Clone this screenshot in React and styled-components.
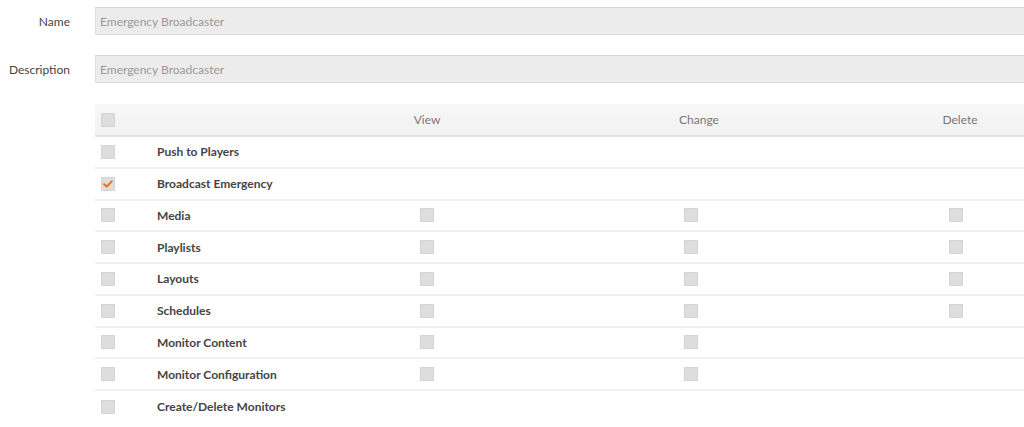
import styled, { createGlobalStyle } from 'styled-components';

const GlobalStyle = createGlobalStyle`
    html, body {
        margin: 0;
        padding: 0;
        background: #FFFFFF;
        overflow: hidden;
    }
    body {
        font-family: Lato, "Open Sans", sans-serif;
    }
`;

const PERMISSIONS = [
    { name: 'Push to Players', cols: [] },
    { name: 'Broadcast Emergency', cols: [], checked: true },
    { name: 'Media', cols: ['view', 'change', 'delete'] },
    { name: 'Playlists', cols: ['view', 'change', 'delete'] },
    { name: 'Layouts', cols: ['view', 'change', 'delete'] },
    { name: 'Schedules', cols: ['view', 'change', 'delete'] },
    { name: 'Monitor Content', cols: ['view', 'change'] },
    { name: 'Monitor Configuration', cols: ['view', 'change'] },
    { name: 'Create/Delete Monitors', cols: [] },
];

// textShift / boxShift: small nudges to line up with the original table
const COLUMNS = [
    { key: 'view', label: 'View', textShift: 0, boxShift: 0 },
    { key: 'change', label: 'Change', textShift: 16, boxShift: 0 },
    { key: 'delete', label: 'Delete', textShift: 10, boxShift: 2 },
];

const Checkbox = ({ checked }) => (
    <CheckBox>
        {checked && (
            <svg width="10" height="8" viewBox="0 0 10 8">
                <path d="M1.2 4.2 L3.8 6.6 L8.8 1.4" fill="none" stroke="#F26B21" strokeWidth="2" strokeLinecap="round" strokeLinejoin="round" />
            </svg>
        )}
    </CheckBox>
);

const FieldRow = ({ label, value }) => (
    <Field>
        <FieldLabel>{label}</FieldLabel>
        <FieldInput>{value}</FieldInput>
    </Field>
);

export default function App() {
    return (
        <Page>
            <GlobalStyle />
            <FieldRow label="Name" value="Emergency Broadcaster" />
            <FieldRow label="Description" value="Emergency Broadcaster" />
            <Table>
                <HeaderRow>
                    <BoxCell><Checkbox /></BoxCell>
                    <div />
                    {COLUMNS.map(c => (
                        <HeaderText key={c.key} $shift={c.textShift}>{c.label}</HeaderText>
                    ))}
                </HeaderRow>
                {PERMISSIONS.map((p, i) => (
                    <Row key={p.name} $last={i === PERMISSIONS.length - 1}>
                        <BoxCell><Checkbox checked={p.checked} /></BoxCell>
                        <RowLabel>{p.name}</RowLabel>
                        {COLUMNS.map(c => (
                            <ColCell key={c.key} $shift={c.boxShift}>
                                {p.cols.includes(c.key) && <Checkbox />}
                            </ColCell>
                        ))}
                    </Row>
                ))}
            </Table>
        </Page>
    );
}

const Page = styled.div`
    width: 1100px;
    padding-top: 7px;
    display: flex;
    flex-direction: column;
    gap: 20px;
`;

const Field = styled.div`
    display: flex;
    align-items: center;
    gap: 25px;
`;

const FieldLabel = styled.label`
    width: 70px;
    text-align: right;
    font-size: 12px;
    color: #444;
`;

const FieldInput = styled.div`
    flex: 1;
    height: 28px;
    box-sizing: border-box;
    display: flex;
    align-items: center;
    padding-left: 4px;
    background: #ECECEC;
    border: 1px solid #DEDEDE;
    border-top-color: #D6D6D6;
    font-size: 12px;
    color: #999;
`;

const Table = styled.div`
    margin-left: 95px;
    margin-top: 1px;
    display: flex;
    flex-direction: column;
`;

const GRID = `
    display: grid;
    grid-template-columns: 62px 138px 264px 264px 264px;
    align-items: center;
    box-sizing: border-box;
`;

const HeaderRow = styled.div`
    ${GRID}
    height: 33px;
    background: linear-gradient(#F7F7F7, #F1F1F1);
    border-bottom: 2px solid #E2E2E2;
`;

const HeaderText = styled.div`
    text-align: center;
    padding-left: ${p => p.$shift}px;
    font-size: 12px;
    color: #777;
`;

const Row = styled.div`
    ${GRID}
    height: 31.75px;
    border-bottom: ${p => p.$last ? 'none' : '2px solid #EFEFEF'};
`;

const BoxCell = styled.div`
    display: flex;
    padding-left: 6px;
`;

const RowLabel = styled.div`
    font-size: 12px;
    font-weight: 700;
    color: #444;
    white-space: nowrap;
`;

const ColCell = styled.div`
    display: flex;
    justify-content: center;
    padding-left: ${p => p.$shift}px;
`;

const CheckBox = styled.span`
    width: 14px;
    height: 14px;
    box-sizing: border-box;
    display: flex;
    align-items: center;
    justify-content: center;
    background: #DDDDDD;
    border: 1px solid #D4D4D4;
`;
